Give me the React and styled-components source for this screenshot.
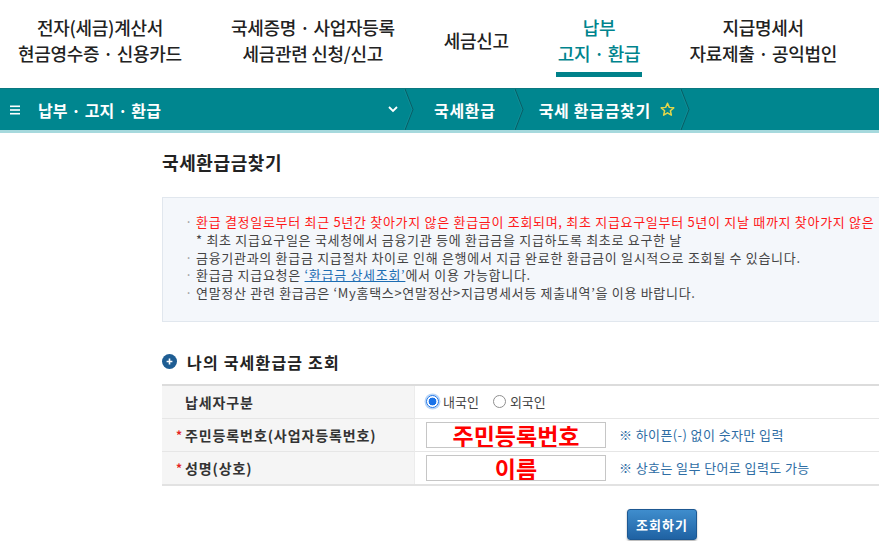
import React from 'react'
import styled, { createGlobalStyle } from 'styled-components'


const GlobalStyle = createGlobalStyle`
    html, body { margin: 0; padding: 0; background: #fff; }
    body {
        width: 879px;
        height: 541px;
        overflow: hidden;
        font-family: 'Noto Sans CJK KR', 'Noto Sans', sans-serif;
        color: #333;
    }
`

// top menu
const TopNav = styled.nav`
    display: flex;
    align-items: flex-start;
    gap: 45px;
    height: 88px;
    box-sizing: border-box;
    padding: 14px 0 0 16px;
`

const Tab = styled.a`
    display: flex;
    flex-direction: column;
    justify-content: center;
    align-items: center;
    height: 52px;
    padding: 0 2px 6px;
    border-bottom: 5px solid ${p => p.$active ? '#00818a' : 'transparent'};
    color: ${p => p.$active ? '#00848d' : '#222'};
    font-size: 18px;
    font-weight: 500;
    line-height: 26px;
    letter-spacing: -0.3px;
    white-space: nowrap;
    text-align: center;
    text-decoration: none;
`

// breadcrumb bar
const Crumbs = styled.div`
    display: flex;
    align-items: stretch;
    height: 41px;
    background: #00868f;
    border-top: 1px solid #0a7880;
    border-bottom: 3px solid #a6d9dd;
    color: #fff;
    font-size: 16px;
    font-weight: 700;
`

const MenuSeg = styled.div`
    display: flex;
    align-items: center;
    width: 404px;
    box-sizing: border-box;
    padding: 0 6px 0 10px;
    gap: 18px;
    span { flex: 1; letter-spacing: 0.1px; }
`

const Seg = styled.div`
    display: flex;
    align-items: center;
    gap: 9px;
    padding: ${p => p.$pad || '0 18px 0 20px'};
    letter-spacing: 0.7px;
    white-space: nowrap;
`

const Sep = () => (
    <svg width='10' height='41' viewBox='0 0 10 41' style={{ display: 'block', flex: 'none' }}>
        <polyline points='1,0 9,20.5 1,41' fill='none' stroke='#0a5d64' strokeWidth='1' />
        <polyline points='0,0 8,20.5 0,41' fill='none' stroke='#2a9aa2' strokeWidth='0.6' opacity='0.6' />
    </svg>
)

// content
const Main = styled.main`
    width: 1000px;
    padding: 17px 0 0 162px;
`

const Title = styled.h2`
    margin: 0 0 22px;
    font-size: 18px;
    line-height: 25px;
    font-weight: 700;
    letter-spacing: 0.6px;
    color: #222;
`

const InfoBox = styled.ul`
    margin: 0;
    list-style: none;
    background: #f4f7fb;
    border: 1px solid #e1e7ee;
    padding: 15px 20px 19px 22px;
`

const Item = styled.li`
    display: flex;
    font-size: 13px;
    line-height: 17.8px;
    letter-spacing: 0.7px;
    color: ${p => p.$red ? '#ff1a1a' : '#444'};
    white-space: nowrap;
    &::before {
        content: '·';
        flex: none;
        width: 11px;
        color: #999;
    }
`

const Note = styled.li`
    padding-left: 11px;
    font-size: 13px;
    line-height: 17.8px;
    letter-spacing: 0.7px;
    color: #444;
    white-space: nowrap;
`

const Link = styled.a`
    color: #1d6db3;
    text-decoration: underline;
`

const Heading = styled.h3`
    display: flex;
    align-items: center;
    gap: 10px;
    margin: 30px 0 12px;
    font-size: 16px;
    line-height: 20px;
    font-weight: 700;
    letter-spacing: 1.2px;
    color: #222;
`

const Table = styled.div`
    display: grid;
    grid-template-columns: 252px 1fr;
    border-top: 2px solid #dcdcdc;
    border-bottom: 2px solid #e2e2e2;
`

const LabelCell = styled.div`
    display: flex;
    align-items: center;
    box-sizing: border-box;
    height: ${p => p.$h}px;
    padding-left: 14px;
    background: #f5f5f5;
    border-top: ${p => p.$first ? 'none' : '1px solid #e6e6e6'};
    font-size: 14px;
    font-weight: 700;
    letter-spacing: 0.9px;
    color: #333;
`

const Req = styled.span`
    width: 9px;
    color: #e52323;
    font-size: 12px;
    visibility: ${p => p.$hide ? 'hidden' : 'visible'};
`

const ValueCell = styled.div`
    display: flex;
    align-items: center;
    box-sizing: border-box;
    height: ${p => p.$h}px;
    padding-left: 11px;
    border-top: ${p => p.$first ? 'none' : '1px solid #e6e6e6'};
    border-left: 1px solid #ececec;
`

const RadioLabel = styled.label`
    display: flex;
    align-items: center;
    gap: 4px;
    margin-right: 14px;
    font-size: 13px;
    color: #444;
`

const RadioDot = styled.span`
    width: 13px;
    height: 13px;
    box-sizing: border-box;
    border-radius: 50%;
    border: 1px solid ${p => p.$on ? '#1a73e8' : '#8f8f8f'};
    background: ${p => p.$on
        ? 'radial-gradient(circle, #1a73e8 0 3.6px, #fff 4.2px)'
        : '#fff'};
    box-shadow: ${p => p.$on ? '0 0 0 1.5px #b9d5f7' : 'none'};
`

const Field = styled.input`
    width: 180px;
    height: 26px;
    box-sizing: border-box;
    padding: 0;
    border: 1px solid #c6c6c6;
    background: #fff;
    color: #ff0000;
    font-family: inherit;
    font-size: 23px;
    font-weight: 700;
    text-align: center;
    outline: none;
`

const Hint = styled.span`
    margin-left: 13px;
    font-size: 13px;
    letter-spacing: 0.4px;
    color: #2e6da4;
`

const Actions = styled.div`
    display: flex;
    justify-content: center;
    padding-top: 23px;
`

const Button = styled.button`
    width: 70px;
    height: 31px;
    border: 1px solid #1d5892;
    border-radius: 3px;
    background: linear-gradient(#3f8dcd, #1f62a3);
    box-shadow: 0 1px 2px rgba(0, 0, 0, 0.35);
    color: #fff;
    font-family: inherit;
    font-size: 13px;
    font-weight: 700;
    letter-spacing: 1px;
`

const rows = [
    { label: '주민등록번호(사업자등록번호)', value: '주민등록번호', hint: '※ 하이픈(-) 없이 숫자만 입력' },
    { label: '성명(상호)', value: '이름', hint: '※ 상호는 일부 단어로 입력도 가능' },
]


export default function App() {
    return (
        <>
            <GlobalStyle />
            <TopNav>
                <Tab>전자(세금)계산서<br />현금영수증 · 신용카드</Tab>
                <Tab>국세증명 · 사업자등록<br />세금관련 신청/신고</Tab>
                <Tab>세금신고</Tab>
                <Tab $active>납부<br />고지 · 환급</Tab>
                <Tab>지급명세서<br />자료제출 · 공익법인</Tab>
            </TopNav>

            <Crumbs>
                <MenuSeg>
                    <svg width='10' height='10' viewBox='0 0 10 10'>
                        <rect x='0' y='0.5' width='10' height='1.6' fill='#fff' />
                        <rect x='0' y='4.2' width='10' height='1.6' fill='#fff' />
                        <rect x='0' y='7.9' width='10' height='1.6' fill='#fff' />
                    </svg>
                    <span>납부 · 고지 · 환급</span>
                    <svg width='10' height='7' viewBox='0 0 10 7'>
                        <polyline points='1,1 5,5 9,1' fill='none' stroke='#fff' strokeWidth='1.8' />
                    </svg>
                </MenuSeg>
                <Sep />
                <Seg>국세환급</Seg>
                <Sep />
                <Seg $pad='0 5px 0 15px'>
                    국세 환급금찾기
                    <svg width='15' height='15' viewBox='0 0 24 24'>
                        <polygon
                            points='12,2 14.9,8.6 22,9.3 16.6,14 18.2,21 12,17.3 5.8,21 7.4,14 2,9.3 9.1,8.6'
                            fill='none' stroke='#e3d64a' strokeWidth='2.4' strokeLinejoin='round' />
                    </svg>
                </Seg>
                <Sep />
            </Crumbs>

            <Main>
                <Title>국세환급금찾기</Title>

                <InfoBox>
                    <Item $red>환급 결정일로부터 최근 5년간 찾아가지 않은 환급금이 조회되며, 최초 지급요구일부터 5년이 지날 때까지 찾아가지 않은</Item>
                    <Note>* 최초 지급요구일은 국세청에서 금융기관 등에 환급금을 지급하도록 최초로 요구한 날</Note>
                    <Item>금융기관과의 환급금 지급절차 차이로 인해 은행에서 지급 완료한 환급금이 일시적으로 조회될 수 있습니다.</Item>
                    <Item>환급금 지급요청은&nbsp;<Link>‘환급금 상세조회’</Link>에서 이용 가능합니다.</Item>
                    <Item>연말정산 관련 환급금은 ‘My홈택스&gt;연말정산&gt;지급명세서등 제출내역’을 이용 바랍니다.</Item>
                </InfoBox>

                <Heading>
                    <svg width='15' height='15' viewBox='0 0 15 15'>
                        <circle cx='7.5' cy='7.5' r='7.5' fill='#1e5d93' />
                        <path d='M7.5 4.6v5.8M4.6 7.5h5.8' stroke='#fff' strokeWidth='1.6' />
                    </svg>
                    나의 국세환급금 조회
                </Heading>

                <Table>
                    <LabelCell $h={32} $first><Req $hide>*</Req>납세자구분</LabelCell>
                    <ValueCell $h={32} $first>
                        <RadioLabel><RadioDot $on />내국인</RadioLabel>
                        <RadioLabel><RadioDot />외국인</RadioLabel>
                    </ValueCell>
                    {rows.map(r => (
                        <React.Fragment key={r.label}>
                            <LabelCell $h={33}><Req>*</Req>{r.label}</LabelCell>
                            <ValueCell $h={33}>
                                <Field readOnly value={r.value} />
                                <Hint>{r.hint}</Hint>
                            </ValueCell>
                        </React.Fragment>
                    ))}
                </Table>

                <Actions>
                    <Button>조회하기</Button>
                </Actions>
            </Main>
        </>
    )
}
